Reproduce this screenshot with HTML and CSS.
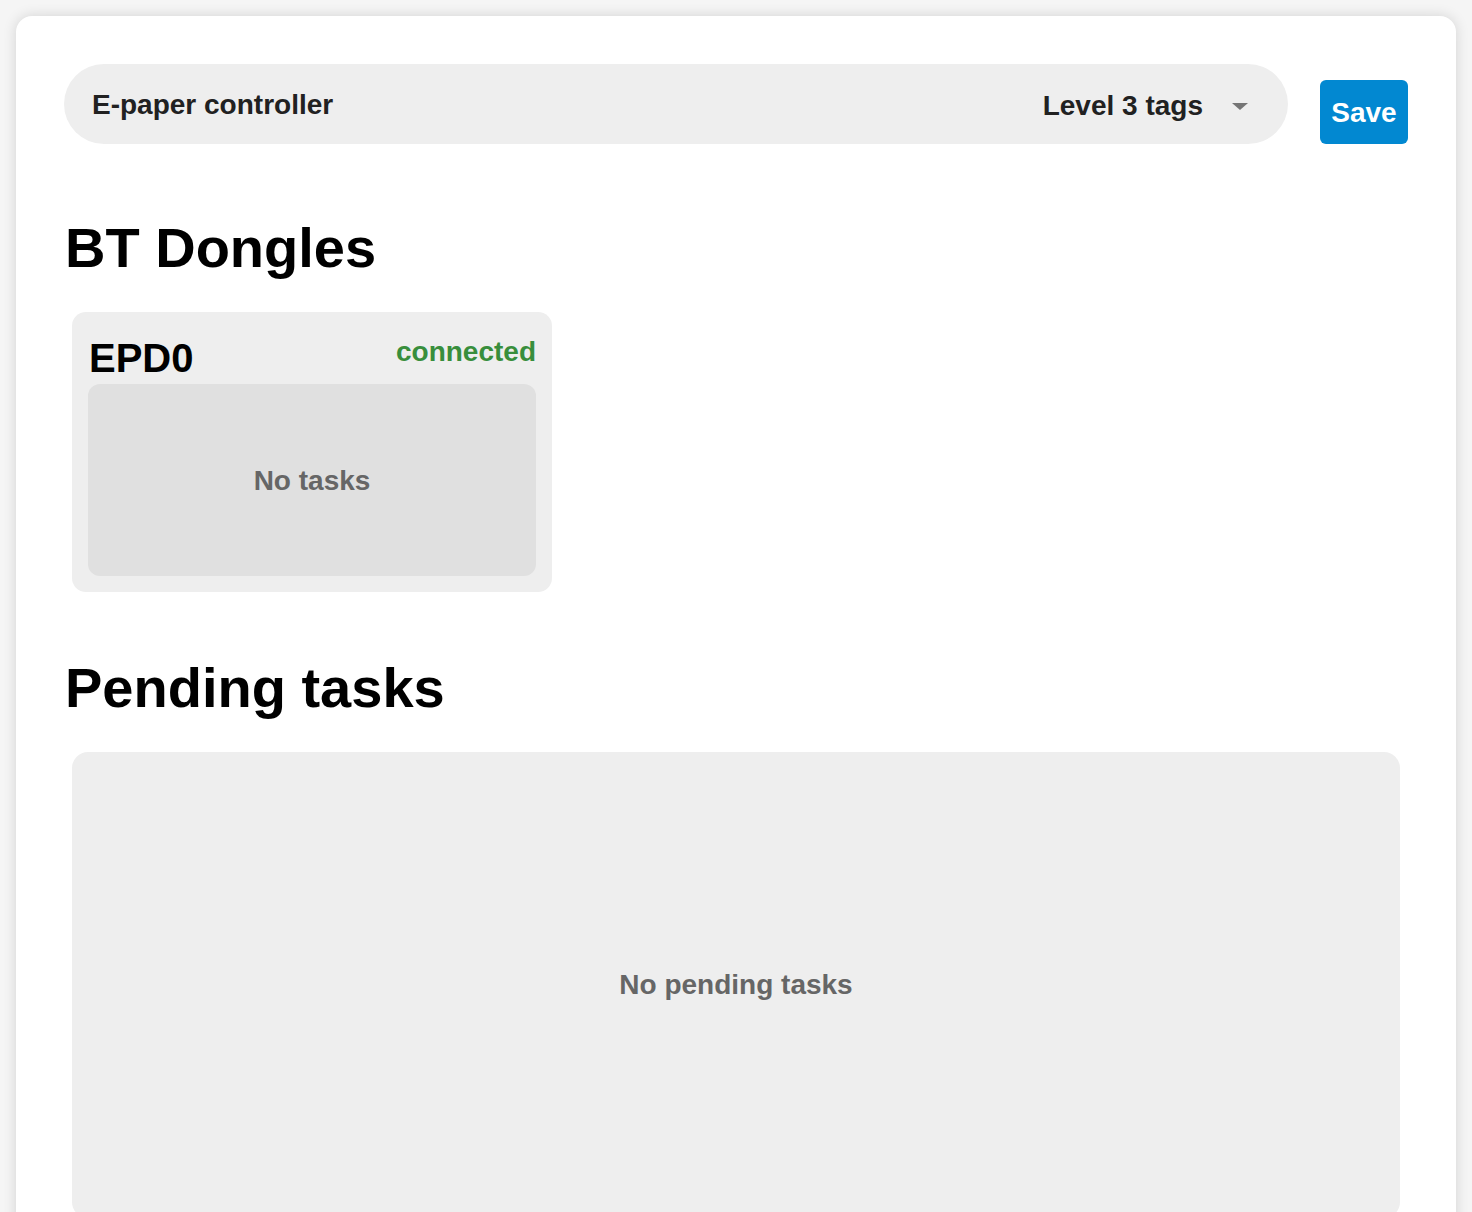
FILE: index.html
```html
<!DOCTYPE html>
<html lang="en">
<head>
<meta charset="utf-8">
<title>E-paper controller</title>
<link rel="stylesheet" href="styles.css">
</head>
<body>
<main class="panel">
  <header class="topbar">
    <div class="selector">
      <span class="selector-name">E-paper controller</span>
      <span class="selector-level">Level 3 tags</span>
      <span class="caret"></span>
    </div>
    <button class="save-btn" type="button">Save</button>
  </header>

  <h2 class="section-title title-dongles">BT Dongles</h2>
  <div class="dongles">
    <div class="dongle">
      <div class="dongle-head">
        <span class="dongle-name">EPD0</span>
        <span class="dongle-status">connected</span>
      </div>
      <div class="dongle-tasks">No tasks</div>
    </div>
  </div>

  <h2 class="section-title title-pending">Pending tasks</h2>
  <div class="pending">No pending tasks</div>
</main>
</body>
</html>
```

FILE: styles.css
```css
html, body {
  margin: 0;
  padding: 0;
}
body {
  background: #f5f5f5;
  padding: 16px;
  font-family: "Liberation Sans", Arial, Helvetica, sans-serif;
  font-weight: 700;
  color: #000;
}
.panel {
  background: #fff;
  border-radius: 16px;
  box-shadow: 0 0 14px rgba(0, 0, 0, 0.14);
  padding: 48px 48px 48px 48px;
}
.topbar {
  display: flex;
  align-items: flex-start;
  gap: 32px;
}
.selector {
  flex: 1;
  height: 80px;
  background: #eeeeee;
  border-radius: 40px;
  display: flex;
  align-items: center;
  padding: 2px 40px 0 28px;
  box-sizing: border-box;
  font-size: 28px;
  color: #212121;
}
.selector-name {
  flex: 1;
}
.selector-level {
  margin-right: 29px;
  padding-top: 2px;
}
.caret {
  width: 0;
  height: 0;
  border-left: 8px solid transparent;
  border-right: 8px solid transparent;
  border-top: 7px solid #757575;
  margin-top: 2px;
}
.save-btn {
  margin-top: 16px;
  height: 64px;
  width: 88px;
  border: none;
  border-radius: 6px;
  background: #0288d1;
  color: #fff;
  font-family: inherit;
  font-weight: 700;
  font-size: 28px;
  padding: 2px 0 0 0;
  line-height: 62px;
}
.section-title {
  margin: 0;
  font-size: 56px;
  line-height: 64px;
  font-weight: 700;
  padding-left: 1px;
}
.title-dongles {
  margin-top: 72px;
}
.title-pending {
  margin-top: 64px;
}
.dongles {
  margin-top: 32px;
  padding: 0 8px;
  display: flex;
  gap: 16px;
}
.dongle {
  width: 480px;
  box-sizing: border-box;
  background: #eeeeee;
  border-radius: 14px;
  padding: 16px;
}
.dongle-head {
  height: 56px;
  display: flex;
  justify-content: space-between;
  align-items: flex-start;
}
.dongle-name {
  font-size: 40px;
  line-height: 52px;
  padding-top: 4px;
  padding-left: 1px;
}
.dongle-status {
  font-size: 28px;
  line-height: 32px;
  padding-top: 8px;
  color: #388e3c;
}
.dongle-tasks {
  height: 192px;
  background: #e0e0e0;
  border-radius: 12px;
  display: flex;
  align-items: center;
  justify-content: center;
  font-size: 28px;
  color: #666;
  padding-top: 2px;
  box-sizing: border-box;
}
.pending {
  margin: 32px 8px 0 8px;
  height: 466px;
  background: #eeeeee;
  border-radius: 16px;
  display: flex;
  align-items: center;
  justify-content: center;
  font-size: 28px;
  color: #666;
}
```
